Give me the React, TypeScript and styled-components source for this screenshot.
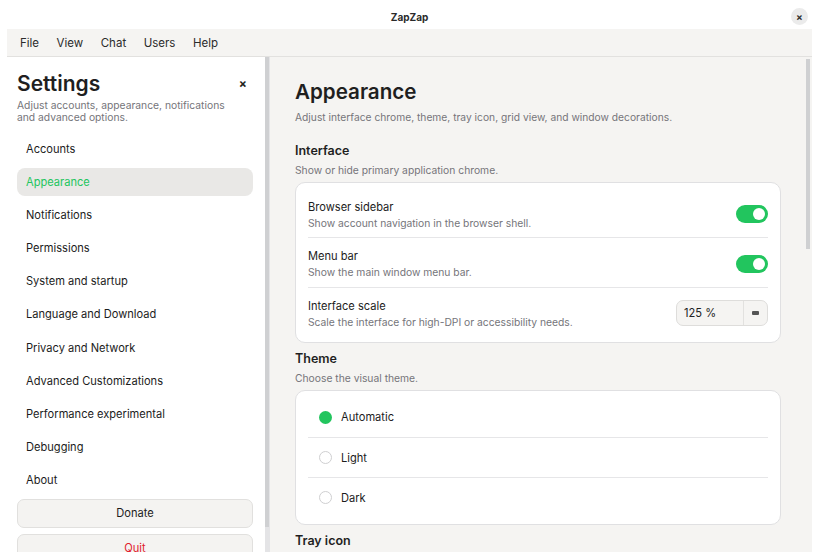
import React from "react";
import styled, { createGlobalStyle } from "styled-components";

const Global = createGlobalStyle`
  html, body { margin: 0; padding: 0; background: #ffffff; }
  body { font-family: Inter, "Noto Sans", sans-serif; color: #1f1f1f; }
  * { box-sizing: border-box; }
`;

const Page = styled.div`
  width: 819px;
  height: 559px;
  background: #ffffff;
  overflow: hidden;
`;

const Window = styled.div`
  margin-left: 7px;
  width: 805px;
  height: 552px;
  display: flex;
  flex-direction: column;
`;

const TitleBar = styled.div`
  height: 29px;
  padding-top: 4px;
  position: relative;
  display: flex;
  align-items: center;
  justify-content: center;
  font-size: 10px;
  font-weight: 700;
  color: #2a2a2a;
  background: #ffffff;
`;

const WinClose = styled.div`
  position: absolute;
  right: 4px;
  top: 8px;
  width: 17px;
  height: 17px;
  border-radius: 50%;
  background: #ebebeb;
  display: flex;
  align-items: center;
  justify-content: center;
  font-size: 10px;
  font-weight: 700;
  color: #333;
`;

const MenuBar = styled.div`
  height: 28px;
  background: #f5f4f2;
  border-bottom: 1px solid #e2e1df;
  display: flex;
  align-items: center;
  padding-left: 13px;
  padding-top: 1px;
`;

const MenuItem = styled.span`
  font-size: 11.5px;
  color: #2b2b2b;
  margin-right: 17.5px;
`;

const Body = styled.div`
  flex: 1;
  display: flex;
  min-height: 0;
`;

const Sidebar = styled.div`
  width: 258px;
  background: #ffffff;
  padding: 14px 12px 0 10px;
  display: flex;
  flex-direction: column;
  overflow: hidden;
`;

const SideHeader = styled.div`
  display: flex;
  align-items: flex-start;
  justify-content: space-between;
`;

const SideTitle = styled.div`
  font-size: 21px;
  font-weight: 600;
  color: #1f1f1f;
  line-height: 26px;
`;

const CloseX = styled.div`
  font-size: 12px;
  font-weight: 700;
  color: #222;
  margin-top: 5px;
  margin-right: 6px;
`;

const SideSub = styled.div`
  font-size: 10.3px;
  line-height: 12px;
  color: #75757a;
  margin-top: 2px;
  margin-bottom: 12px;
`;

const NavList = styled.div`
  display: flex;
  flex-direction: column;
  gap: 5.1px;
`;

const NavItem = styled.div<{ $active?: boolean }>`
  height: 28px;
  border-radius: 8px;
  display: flex;
  align-items: center;
  padding-left: 9px;
  font-size: 11.1px;
  color: ${(p) => (p.$active ? "#22c55e" : "#1c1c1c")};
  background: ${(p) => (p.$active ? "#e9e8e6" : "transparent")};
`;

const SideButton = styled.div<{ $danger?: boolean }>`
  height: 29px;
  border-radius: 7px;
  border: 1px solid #e1e0de;
  background: #f4f3f1;
  display: flex;
  align-items: center;
  justify-content: center;
  font-size: 11.1px;
  color: ${(p) => (p.$danger ? "#e11d2e" : "#1c1c1c")};
  flex-shrink: 0;
`;

const ButtonStack = styled.div`
  display: flex;
  flex-direction: column;
  gap: 6px;
  margin-top: 5px;
`;

const ScrollTrack = styled.div<{ $bg: string }>`
  width: 5px;
  background: ${(p) => p.$bg};
  position: relative;
  flex-shrink: 0;
`;

const Thumb = styled.div<{ $top: number; $height: number }>`
  position: absolute;
  left: 0;
  width: 4px;
  top: ${(p) => p.$top}px;
  height: ${(p) => p.$height}px;
  background: #cfd0d2;
`;

const Main = styled.div`
  flex: 1;
  background: #f5f4f2;
  display: flex;
  min-width: 0;
`;

const MainContent = styled.div`
  flex: 1;
  padding: 22px 25px 0 25px;
  overflow: hidden;
`;

const PageTitle = styled.div`
  font-size: 20.6px;
  font-weight: 600;
  line-height: 26px;
  color: #1f1f1f;
`;

const PageSub = styled.div`
  font-size: 10.25px;
  color: #75757a;
  margin-top: 6px;
`;

const SectionTitle = styled.div<{ $top: number }>`
  font-size: 12.5px;
  font-weight: 600;
  color: #1f1f1f;
  margin-top: ${(p) => p.$top}px;
`;

const SectionSub = styled.div`
  font-size: 10.3px;
  color: #75757a;
  margin-top: 6px;
  margin-bottom: 6px;
`;

const Card = styled.div<{ $pad?: string }>`
  background: #ffffff;
  border: 1px solid #e0e0e2;
  border-radius: 10px;
  padding: ${(p) => p.$pad || "0 12px"};
`;

const Row = styled.div<{ $h: number; $shift: number }>`
  height: ${(p) => p.$h}px;
  display: flex;
  align-items: center;
  justify-content: space-between;
  padding-top: ${(p) => Math.max(0, p.$shift * 2)}px;
  padding-bottom: ${(p) => Math.max(0, -p.$shift * 2)}px;
  & + & {
    border-top: 1px solid #e6e6e8;
  }
`;

const RowText = styled.div`
  display: flex;
  flex-direction: column;
  gap: 3px;
`;

const RowTitle = styled.div`
  font-size: 11.1px;
  color: #1c1c1c;
`;

const RowDesc = styled.div`
  font-size: 10.3px;
  color: #75757a;
`;

const Toggle = styled.div`
  width: 32px;
  height: 18px;
  border-radius: 9px;
  background: #22c55e;
  position: relative;
  flex-shrink: 0;
`;

const Knob = styled.div`
  position: absolute;
  right: 3px;
  top: 3px;
  width: 12px;
  height: 12px;
  border-radius: 50%;
  background: #ffffff;
`;

const Spin = styled.div`
  width: 92px;
  height: 26px;
  border: 1px solid #dedddb;
  border-radius: 7px;
  background: #f5f4f2;
  display: flex;
  align-items: stretch;
  font-size: 11.1px;
  color: #222;
`;

const SpinValue = styled.div`
  flex: 1;
  display: flex;
  align-items: center;
  padding-left: 7px;
  border-right: 1px solid #e2e1df;
`;

const SpinBtn = styled.div`
  width: 23px;
  display: flex;
  align-items: center;
  justify-content: center;
`;

const Minus = styled.div`
  width: 7px;
  height: 4px;
  background: #555;
  border-radius: 1px;
`;

const RadioRow = styled.div`
  height: 40px;
  display: flex;
  align-items: center;
  padding-left: 11px;
  gap: 9px;
  font-size: 11.1px;
  color: #1c1c1c;
  & + & {
    border-top: 1px solid #e6e6e8;
  }
`;

const Radio = styled.div<{ $on?: boolean }>`
  width: 13px;
  height: 13px;
  border-radius: 50%;
  background: ${(p) => (p.$on ? "#22c55e" : "#ffffff")};
  border: ${(p) => (p.$on ? "none" : "1px solid #cfcfd1")};
`;

const Spacer = styled.div`
  width: 1px;
  flex-shrink: 0;
`;

const navItems = [
  "Accounts",
  "Appearance",
  "Notifications",
  "Permissions",
  "System and startup",
  "Language and Download",
  "Privacy and Network",
  "Advanced Customizations",
  "Performance experimental",
  "Debugging",
  "About",
];

export default function App() {
  return (
    <Page>
      <Global />
      <Window>
        <TitleBar>
          ZapZap
          <WinClose>×</WinClose>
        </TitleBar>
        <MenuBar>
          {["File", "View", "Chat", "Users", "Help"].map((m) => (
            <MenuItem key={m}>{m}</MenuItem>
          ))}
        </MenuBar>
        <Body>
          <Sidebar>
            <SideHeader>
              <SideTitle>Settings</SideTitle>
              <CloseX>×</CloseX>
            </SideHeader>
            <SideSub>
              Adjust accounts, appearance, notifications
              <br />
              and advanced options.
            </SideSub>
            <NavList>
              {navItems.map((n) => (
                <NavItem key={n} $active={n === "Appearance"}>
                  {n}
                </NavItem>
              ))}
            </NavList>
            <ButtonStack>
              <SideButton>Donate</SideButton>
              <SideButton $danger>Quit</SideButton>
            </ButtonStack>
          </Sidebar>
          <ScrollTrack $bg="#e4e4e6">
            <Thumb $top={0} $height={470} />
          </ScrollTrack>
          <Main>
            <MainContent>
              <PageTitle>Appearance</PageTitle>
              <PageSub>
                Adjust interface chrome, theme, tray icon, grid view, and window decorations.
              </PageSub>
              <SectionTitle $top={20}>Interface</SectionTitle>
              <SectionSub>Show or hide primary application chrome.</SectionSub>
              <Card>
                <Row $h={54} $shift={4}>
                  <RowText>
                    <RowTitle>Browser sidebar</RowTitle>
                    <RowDesc>Show account navigation in the browser shell.</RowDesc>
                  </RowText>
                  <Toggle>
                    <Knob />
                  </Toggle>
                </Row>
                <Row $h={50} $shift={1}>
                  <RowText>
                    <RowTitle>Menu bar</RowTitle>
                    <RowDesc>Show the main window menu bar.</RowDesc>
                  </RowText>
                  <Toggle>
                    <Knob />
                  </Toggle>
                </Row>
                <Row $h={55} $shift={-2}>
                  <RowText>
                    <RowTitle>Interface scale</RowTitle>
                    <RowDesc>Scale the interface for high-DPI or accessibility needs.</RowDesc>
                  </RowText>
                  <Spin>
                    <SpinValue>125 %</SpinValue>
                    <SpinBtn>
                      <Minus />
                    </SpinBtn>
                  </Spin>
                </Row>
              </Card>
              <SectionTitle $top={8}>Theme</SectionTitle>
              <SectionSub>Choose the visual theme.</SectionSub>
              <Card $pad="6px 12px 7px">
                <RadioRow>
                  <Radio $on />
                  Automatic
                </RadioRow>
                <RadioRow>
                  <Radio />
                  Light
                </RadioRow>
                <RadioRow>
                  <Radio />
                  Dark
                </RadioRow>
              </Card>
              <SectionTitle $top={8}>Tray icon</SectionTitle>
            </MainContent>
            <ScrollTrack $bg="transparent">
              <Thumb $top={2} $height={190} />
            </ScrollTrack>
            <Spacer />
          </Main>
        </Body>
      </Window>
    </Page>
  );
}
